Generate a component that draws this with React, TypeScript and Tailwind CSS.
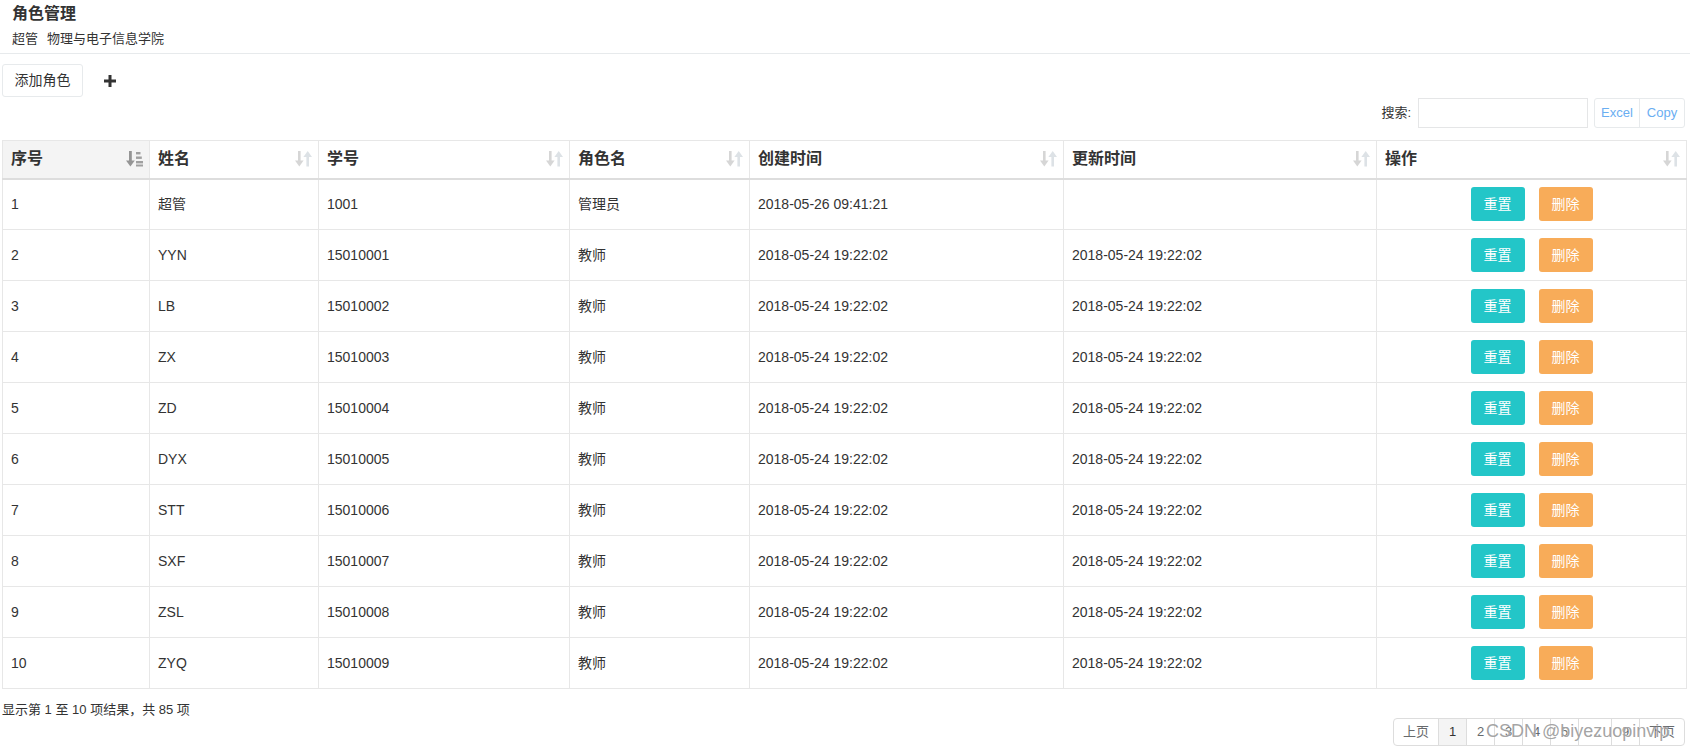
import React from "react";

const rows = [
  ["1", "超管", "1001", "管理员", "2018-05-26 09:41:21", ""],
  ["2", "YYN", "15010001", "教师", "2018-05-24 19:22:02", "2018-05-24 19:22:02"],
  ["3", "LB", "15010002", "教师", "2018-05-24 19:22:02", "2018-05-24 19:22:02"],
  ["4", "ZX", "15010003", "教师", "2018-05-24 19:22:02", "2018-05-24 19:22:02"],
  ["5", "ZD", "15010004", "教师", "2018-05-24 19:22:02", "2018-05-24 19:22:02"],
  ["6", "DYX", "15010005", "教师", "2018-05-24 19:22:02", "2018-05-24 19:22:02"],
  ["7", "STT", "15010006", "教师", "2018-05-24 19:22:02", "2018-05-24 19:22:02"],
  ["8", "SXF", "15010007", "教师", "2018-05-24 19:22:02", "2018-05-24 19:22:02"],
  ["9", "ZSL", "15010008", "教师", "2018-05-24 19:22:02", "2018-05-24 19:22:02"],
  ["10", "ZYQ", "15010009", "教师", "2018-05-24 19:22:02", "2018-05-24 19:22:02"],
];

const headers = ["序号", "姓名", "学号", "角色名", "创建时间", "更新时间", "操作"];
const widths = [147, 169, 251, 180, 314, 313, 310];

function SortBoth() {
  return (
    <svg width="17" height="16" viewBox="0 0 17 16" className="shrink-0">
      <rect x="3" y="0" width="2.6" height="10" fill="#d6d6d6" />
      <polygon points="0,9.5 8.6,9.5 4.3,15.5" fill="#d6d6d6" />
      <rect x="11.4" y="5.5" width="2.6" height="10" fill="#dde2e6" />
      <polygon points="8.4,6 17,6 12.7,0" fill="#dde2e6" />
    </svg>
  );
}

function SortAsc() {
  return (
    <svg width="17" height="16" viewBox="0 0 17 16" className="shrink-0">
      <rect x="3" y="0" width="2.8" height="10" fill="#959595" />
      <polygon points="0,9.5 8.8,9.5 4.4,15.5" fill="#959595" />
      <rect x="10" y="1" width="4.5" height="2.4" fill="#a0a0a0" />
      <rect x="10" y="5.5" width="5.8" height="2.4" fill="#a0a0a0" />
      <rect x="10" y="10" width="7" height="2.4" fill="#a0a0a0" />
      <rect x="10" y="13.5" width="7" height="2" fill="#a0a0a0" />
    </svg>
  );
}

export default function App() {
  return (
    <div
      className="w-[1690px] h-[750px] bg-white text-[#333] relative overflow-hidden"
      style={{ fontFamily: '"Liberation Sans", Arial, "Noto Sans CJK SC", sans-serif' }}
    >
      {/* Title */}
      <div className="pl-[12px] pt-[3px] pb-[5px] border-b border-[#e7eaec]">
        <div className="text-[16px] leading-[22px] font-bold text-[#333]">角色管理</div>
        <div className="text-[13px] leading-[18px] mt-[5px] text-[#333]">
          超管<span className="ml-[9px]">物理与电子信息学院</span>
        </div>
      </div>

      {/* Add button row */}
      <div className="flex items-center pl-[2px] mt-[10px] h-[33px]">
        <button className="h-[33px] w-[81px] border border-[#e7eaec] rounded-[3px] bg-white text-[14px] text-[#333] flex items-center justify-center">
          添加角色
        </button>
        <svg width="12" height="12" viewBox="0 0 12 12" className="ml-[21px]">
          <rect x="4.5" y="0" width="3" height="12" fill="#333" />
          <rect x="0" y="4.5" width="12" height="3" fill="#333" />
        </svg>
      </div>

      {/* Search row */}
      <div className="flex items-center justify-end pr-[5px] mt-[1px] h-[30px]">
        <span className="text-[13px] text-[#333] mr-[7px]">搜索:</span>
        <input className="w-[170px] h-[30px] border border-[#e5e6e7] outline-none px-2 text-[13px]" />
        <div className="ml-[6px] flex h-[30px] border border-[#e7eaec] rounded-[3px] text-[13px] text-[#6aaef2]">
          <div className="w-[45px] flex items-center justify-center border-r border-[#e7eaec]">Excel</div>
          <div className="w-[44px] flex items-center justify-center">Copy</div>
        </div>
      </div>

      {/* Table */}
      <div className="pl-[2px] pr-[4px] mt-[12px]">
        <table className="table-fixed border-collapse w-[1684px]">
          <colgroup>
            {widths.map((w, i) => (
              <col key={i} style={{ width: w }} />
            ))}
          </colgroup>
          <thead>
            <tr className="h-[38px]">
              {headers.map((h, i) => (
                <th
                  key={h}
                  className={`border border-[#e7e7e7] border-b-2 border-b-[#dddddd] px-[8px] text-left font-bold text-[16px] text-[#333] ${
                    i === 0 ? "bg-[#f4f4f4]" : "bg-white"
                  }`}
                >
                  <div className="flex items-center justify-between">
                    <span>{h}</span>
                    <span className="mr-[-2px]">{i === 0 ? <SortAsc /> : <SortBoth />}</span>
                  </div>
                </th>
              ))}
            </tr>
          </thead>
          <tbody>
            {rows.map((r) => (
              <tr key={r[0]} className="h-[51px]">
                {r.map((c, j) => (
                  <td key={j} className="border border-[#e7e7e7] px-[8px] text-[14px] text-[#333]">
                    {c}
                  </td>
                ))}
                <td className="border border-[#e7e7e7] px-[8px]">
                  <div className="flex items-center justify-center gap-[14px]">
                    <button className="w-[54px] h-[34px] rounded-[3px] bg-[#23c6c8] text-white text-[14px] flex items-center justify-center">
                      重置
                    </button>
                    <button className="w-[54px] h-[34px] rounded-[3px] bg-[#f8ac59] text-white text-[14px] flex items-center justify-center">
                      删除
                    </button>
                  </div>
                </td>
              </tr>
            ))}
          </tbody>
        </table>
      </div>

      {/* Footer */}
      <div className="pl-[2px] mt-[12px] text-[13px] leading-[18px] text-[#333]">
        显示第 1 至 10 项结果，共 85 项
      </div>
      <div className="flex justify-end pr-[5px] mt-[-1px]">
        <div className="flex h-[28px] border border-[#dddddd] rounded-[4px] text-[13px] text-[#676a6c] overflow-hidden">
          <div className="w-[45px] flex items-center justify-center border-r border-[#dddddd]">上页</div>
          <div className="w-[28px] flex items-center justify-center border-r border-[#dddddd] bg-[#f4f4f4] text-[#333]">1</div>
          <div className="w-[28px] flex items-center justify-center border-r border-[#dddddd]">2</div>
          <div className="w-[28px] flex items-center justify-center border-r border-[#dddddd]">3</div>
          <div className="w-[28px] flex items-center justify-center border-r border-[#dddddd]">4</div>
          <div className="w-[28px] flex items-center justify-center border-r border-[#dddddd]">5</div>
          <div className="w-[33px] flex items-center justify-center border-r border-[#dddddd]">…</div>
          <div className="w-[28px] flex items-center justify-center border-r border-[#dddddd]">9</div>
          <div className="w-[44px] flex items-center justify-center">下页</div>
        </div>
      </div>

      {/* Watermark */}
      <div
        className="absolute left-[1486px] top-[719px] text-[18px] leading-[24px] text-[#8c8c8c]/80 pointer-events-none whitespace-nowrap"
        style={{ textShadow: "0 0 1px #fff" }}
      >
        CSDN @biyezuopinvip
      </div>
    </div>
  );
}
